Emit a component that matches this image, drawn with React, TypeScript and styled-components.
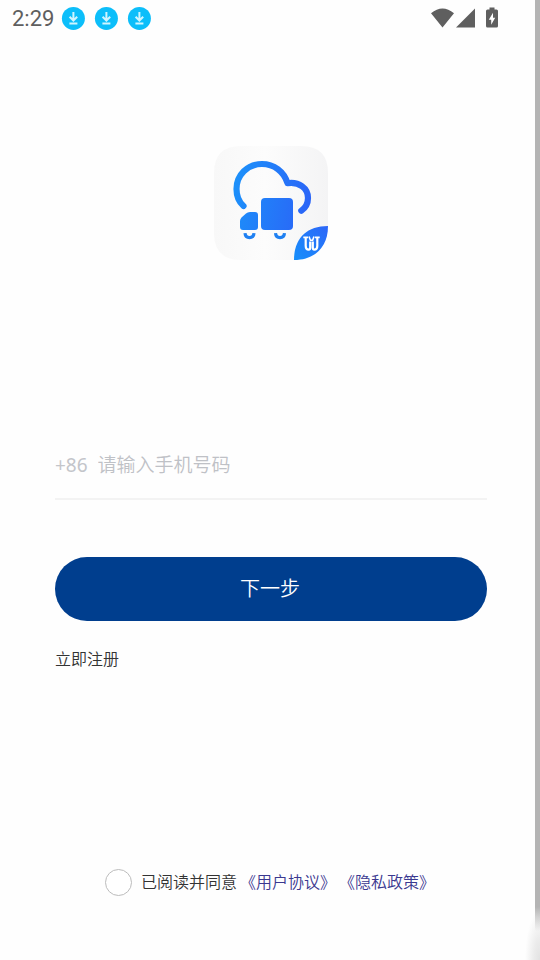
import React, { useState } from "react";
import styled, { createGlobalStyle } from "styled-components";

const GlobalStyle = createGlobalStyle`
  *, *::before, *::after { box-sizing: border-box; }
  body {
    margin: 0;
    background: #fefefe;
    font-family: "Noto Sans", "Noto Sans CJK SC", sans-serif;
    font-weight: 350;
    color: #333;
  }
`;

const Screen = styled.div`
  display: flex;
  min-height: 100vh;
`;

const Page = styled.div`
  flex: 1;
  min-width: 0;
  display: flex;
  flex-direction: column;
`;

const EdgeStrip = styled.div`
  width: 5px;
  flex: none;
  display: flex;
  flex-direction: column;
`;

const EdgeBar = styled.div`
  flex: 1;
  background: #b4b4b4;
`;

const EdgeFade = styled.div`
  height: 53px;
  margin-left: -11px;
  background:
    linear-gradient(to bottom, #b4b4b4 0, rgba(200, 200, 200, 0) 24px) right / 5px 100% no-repeat,
    radial-gradient(ellipse 15px 50px at 100% 100%, #e2e2e2 0, #ebebeb 40%, #fefefe 100%);
`;

const StatusBar = styled.header`
  display: flex;
  justify-content: space-between;
  align-items: center;
  height: 36px;
  padding: 0 37px 0 12px;
  color: #5f5f5f;
`;

const StatusGroup = styled.div<{ $gap: number }>`
  display: flex;
  align-items: center;
  gap: ${(p) => p.$gap}px;
`;

const Clock = styled.time`
  font: 22px/36px Roboto, sans-serif;
  padding-top: 2px;
  margin-right: -2px;
`;

const Content = styled.main`
  flex: 1;
  display: flex;
  flex-direction: column;
  padding: 110px 48px 64px 55px;
`;

const LogoMark = styled.svg`
  display: block;
  align-self: center;
  width: 114px;
  height: 114px;
`;

const Form = styled.form`
  display: flex;
  flex-direction: column;
  margin-top: 170px;
`;

const PhoneField = styled.label`
  display: flex;
  align-items: center;
  gap: 10px;
  height: 70px;
  padding-top: 2px;
  border-bottom: 2px solid #f3f3f3;
  font-size: 19px;
  font-weight: 400;
  line-height: 28px;
  color: #c3c5ca;
`;

const PhoneInput = styled.input`
  flex: 1;
  min-width: 0;
  height: 32px;
  padding: 0;
  border: 0;
  outline: 0;
  background: transparent;
  font-family: inherit;
  font-size: 19px;
  font-weight: 350;
  color: #333;
  &::placeholder { color: #bfc1c6; opacity: 1; }
`;

const NextButton = styled.button`
  height: 64px;
  margin-top: 57px;
  padding: 0 2px 4px 0;
  border: 0;
  border-radius: 32px;
  background: #003e8e;
  color: #fff;
  font-family: inherit;
  font-size: 20px;
  font-weight: 350;
  cursor: pointer;
`;

const Link = styled.a<{ $accent?: boolean }>`
  color: ${(p) => (p.$accent ? "#3a3890" : "#333")};
  font-size: 16px;
  line-height: 24px;
  text-decoration: none;
`;

const RegisterRow = styled.div`
  display: flex;
  margin-top: 26px;
`;

const Agreement = styled.div`
  display: flex;
  align-items: center;
  align-self: center;
  gap: 3px;
  padding-right: 2px;
  margin-top: auto;
  font-size: 16px;
  line-height: 28px;
  white-space: nowrap;
`;

const AgreeLabel = styled.label`
  display: flex;
  align-items: center;
  gap: 9px;
`;

const AgreeBox = styled.input`
  appearance: none;
  width: 27px;
  height: 27px;
  margin: 0;
  border: 1px solid #bcbcbc;
  border-radius: 50%;
  background: #fff;
  &:checked { border: 8px solid #003e8e; }
`;

const DownloadBadge = () => (
  <svg width="24" height="24" viewBox="0 0 24 24" aria-hidden="true">
    <circle cx="12.4" cy="12.4" r="11.5" fill="#0cbefa" />
    <path d="M12.4 6v8M8.6 10.8l3.8 3.7 3.8-3.7M8.4 17.4h8" fill="none" stroke="#d0f5ff" strokeWidth="2" />
  </svg>
);

const Logo = () => (
  <LogoMark viewBox="0 0 114 114" role="img" aria-label="Logo">
    <defs>
      <linearGradient id="tile" x1="0" y1="0" x2="1" y2="0">
        <stop offset="0" stopColor="#f8f8f8" />
        <stop offset="0.45" stopColor="#fcfcfc" />
        <stop offset="1" stopColor="#f4f4f5" />
      </linearGradient>
      <linearGradient id="blue" gradientUnits="userSpaceOnUse" x1="19" y1="45" x2="98" y2="60">
        <stop offset="0" stopColor="#1c90fa" />
        <stop offset="1" stopColor="#2b63f7" />
      </linearGradient>
      <linearGradient id="leaf" x1="0" y1="1" x2="1" y2="0">
        <stop offset="0" stopColor="#168ffb" />
        <stop offset="1" stopColor="#2d66f8" />
      </linearGradient>
    </defs>
    <path d="M27 0H87Q114 0 114 27V80L80 114H27Q0 114 0 87V27Q0 0 27 0Z" fill="url(#tile)" />
    <path d="M29.5 60C25 56 22.5 49.5 22.5 43C22.5 29 33.5 18 48 18C60 18 70 25.5 73.5 37.2C85 35.5 94 42 94 52C94 57.5 91.5 61.8 87.3 64.8" fill="none" stroke="url(#blue)" strokeWidth="6.2" strokeLinecap="round" strokeLinejoin="round" />
    <rect x="47" y="52" width="32" height="32" rx="4" fill="url(#blue)" />
    <path d="M36 66H41Q44 66 44 69V81Q44 84 41 84H29Q26 84 26 81V75Q26 73 27.5 71.5L32 67.5Q33.5 66 36 66Z" fill="url(#blue)" />
    <path d="M31 87.2C31.5 93.2 39.5 93.2 40 87.2M61.5 87.2C62 93.2 70 93.2 70.5 87.2" fill="none" stroke="#1f80f2" strokeWidth="3.2" />
    <path d="M80 114C80 93 92 80 114 80C114 101 101 114 80 114Z" fill="url(#leaf)" />
    <g fill="none" stroke="#fff">
      <path d="M91.7 91.5V100Q91.7 103.6 94.7 103.6Q96.2 103.6 96.2 101.5V95.5M103.3 91.5V100Q103.3 103.6 100.3 103.6Q98.8 103.6 98.8 101.5V95.5" strokeWidth="2.2" />
      <path d="M89.3 91.4H94M101 91.4H105.7" strokeWidth="1.8" />
      <path d="M95 90.5L96.4 94.3H98.6L100 90.5" strokeWidth="1.6" />
    </g>
  </LogoMark>
);

export default function App() {
  const [phone, setPhone] = useState("");
  const [agreed, setAgreed] = useState(false);

  return (
    <>
      <GlobalStyle />
      <Screen>
        <Page>
          <StatusBar>
            <StatusGroup $gap={9}>
              <Clock>2:29</Clock>
              <DownloadBadge />
              <DownloadBadge />
              <DownloadBadge />
            </StatusGroup>
            <StatusGroup $gap={10}>
              <svg width="45" height="22" viewBox="0 0 45 22" fill="currentColor" role="img" aria-label="Wi-Fi and mobile signal">
                <path d="M0 6.2Q11.5-3.4 23 6.2L11.5 20.5ZM44 1.5V20.5H25Z" />
              </svg>
              <svg width="12" height="22" viewBox="0 0 12 22" role="img" aria-label="Battery charging">
                <path d="M3.5 0.5H8.5V2.5H10.5Q12 2.5 12 4V19Q12 20.5 10.5 20.5H1.5Q0 20.5 0 19V4Q0 2.5 1.5 2.5H3.5Z" fill="currentColor" />
                <path d="M7 5.7V10.7H9.2L5.2 17.7V12.7H2.8Z" fill="#fff" />
              </svg>
            </StatusGroup>
          </StatusBar>
          <Content>
            <Logo />
            <Form onSubmit={(e) => e.preventDefault()}>
              <PhoneField>
                <span>+86</span>
                <PhoneInput
                  type="tel"
                  placeholder="请输入手机号码"
                  aria-label="请输入手机号码"
                  value={phone}
                  onChange={(e) => setPhone(e.target.value)}
                />
              </PhoneField>
              <NextButton type="submit">下一步</NextButton>
            </Form>
            <RegisterRow>
              <Link href="#register">立即注册</Link>
            </RegisterRow>
            <Agreement>
              <AgreeLabel>
                <AgreeBox type="checkbox" checked={agreed} onChange={(e) => setAgreed(e.target.checked)} />
                已阅读并同意
              </AgreeLabel>
              <Link $accent href="#terms">《用户协议》</Link>
              <Link $accent href="#privacy">《隐私政策》</Link>
            </Agreement>
          </Content>
        </Page>
        <EdgeStrip>
          <EdgeBar />
          <EdgeFade />
        </EdgeStrip>
      </Screen>
    </>
  );
}
